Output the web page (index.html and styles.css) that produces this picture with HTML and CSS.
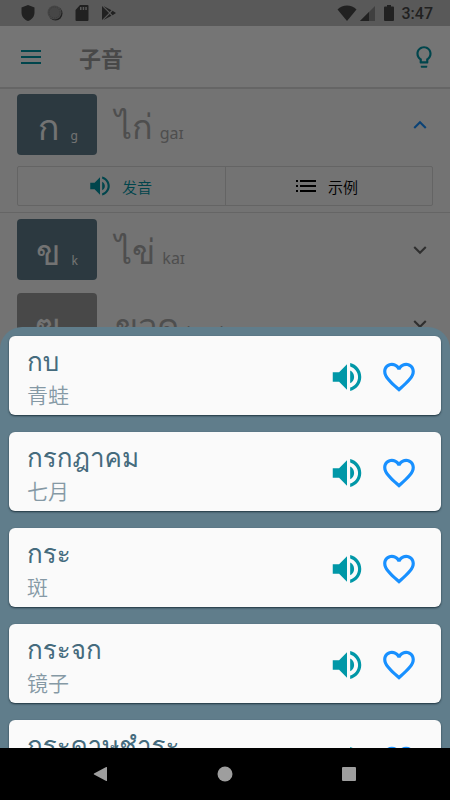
FILE: index.html
```html
<!DOCTYPE html>
<html lang="zh-CN">
<head>
<meta charset="utf-8">
<meta name="viewport" content="width=device-width, initial-scale=1">
<title>子音</title>
<link rel="stylesheet" href="styles.css">
</head>
<body>
<svg class="defs" aria-hidden="true">
  <symbol id="volume" viewBox="0 0 24 24"><path d="M3 9v6h4l5 5V4L7 9H3zm13.500 3c0-1.770-1.020-3.290-2.500-4.030v8.050c1.480-.730 2.500-2.250 2.500-4.020zM14 3.230v2.060c2.890.860 5 3.540 5 6.710s-2.110 5.850-5 6.710v2.060c4.010-.910 7-4.490 7-8.770s-2.990-7.860-7-8.770z"/></symbol>
  <symbol id="heart" viewBox="0 0 24 24"><path d="M16.500 3c-1.740 0-3.410.810-4.500 2.090C10.910 3.810 9.240 3 7.500 3 4.420 3 2 5.420 2 8.500c0 3.780 3.400 6.860 8.550 11.540L12 21.350l1.450-1.320C18.600 15.360 22 12.280 22 8.500 22 5.420 19.580 3 16.500 3zm-4.400 15.550l-.1.100-.1-.1C7.140 14.240 4 11.390 4 8.500 4 6.500 5.500 5 7.500 5c1.540 0 3.040.990 3.570 2.360h1.870C13.460 5.990 14.960 5 16.500 5c2 0 3.500 1.500 3.500 3.500 0 2.890-3.140 5.740-7.900 10.050z"/></symbol>
  <symbol id="down" viewBox="0 0 24 24"><path d="M6.500 8L12 13.400 17.500 8l1.600 1.600L12 16.700 4.900 9.600z"/></symbol>
  <symbol id="up" viewBox="0 0 24 24"><path d="M6.500 16L12 10.600l5.500 5.400 1.600-1.600L12 7.300l-7.100 7.100z"/></symbol>
</svg>
<div class="app">
  <main class="screen">
    <div class="status">
      <div class="status-left">
        <svg width="14" height="16" viewBox="0 0 14 16"><path d="M7 0l6.500 2.500v5c0 4-2.700 7.300-6.500 8.500C3.200 14.800.5 11.500.5 7.500v-5z"/></svg>
        <svg width="16" height="16" viewBox="0 0 16 16"><circle cx="8.500" cy="8.500" r="7"/><circle class="disc" cx="7.500" cy="7.500" r="7"/><circle class="disc-ring" cx="7.500" cy="7.500" r="5.500"/></svg>
        <svg width="14" height="16" viewBox="0 0 14 16"><path fill-rule="evenodd" d="M5 0h7.500Q13.500 0 13.500 1v14q0 1-1 1h-11q-1 0-1-1V5zM5 2v3h1.500V2zm2.700 0v3h1.500V2zm2.600 0v3h1.500V2z"/></svg>
        <svg width="16" height="16" viewBox="0 0 16 16"><path d="M1 1l7 7-7 7zM2.500 1l8 4.200L8.700 7zM11.600 5.800L15 8l-3.400 2.200L9.500 8zM2.500 15l8-4.200L8.700 9z"/></svg>
      </div>
      <div class="status-right">
        <svg width="20" height="16" viewBox="0 0 20 16"><path d="M10 16L.5 4.500C3 2 6.500.5 10 .5S17 2 19.500 4.500z"/></svg>
        <svg width="16" height="16" viewBox="0 0 16 16"><path class="faint" d="M16 1v15H1z"/><path d="M10 7v9H1z"/></svg>
        <svg class="battery" width="10" height="16" viewBox="0 0 10 16"><path d="M3 0h4v1.500h2q1 0 1 1V15q0 1-1 1H1q-1 0-1-1V2.500q0-1 1-1h2z"/></svg>
        <span>3:47</span>
      </div>
    </div>
    <header class="bar">
      <button class="icon-btn" aria-label="菜单"><svg width="20" height="14" viewBox="0 0 20 14"><path d="M0 0h20v2H0zM0 6h20v2H0zM0 12h20v2H0z"/></svg></button>
      <h1>子音</h1>
      <button class="icon-btn" aria-label="提示"><svg width="26" height="26" viewBox="0 0 24 24"><path d="M9 21c0 .5.400 1 1 1h4c.6 0 1-.5 1-1v-1H9v1zm3-19C8.100 2 5 5.100 5 9c0 2.400 1.200 4.500 3 5.700V17c0 .5.400 1 1 1h6c.6 0 1-.5 1-1v-2.300c1.800-1.300 3-3.400 3-5.700 0-3.900-3.100-7-7-7zm2.900 11.100l-.9.600V16h-4v-2.300l-.9-.6C7.800 12.200 7 10.600 7 9c0-2.800 2.200-5 5-5s5 2.200 5 5c0 1.600-.8 3.200-2.100 4.100z"/></svg></button>
    </header>
    <section class="entry open">
      <div class="entry-row">
        <div class="tile"><span class="letter">ก</span><span class="sound">g</span></div>
        <div class="word"><span class="thai">ไก่</span><span class="ipa">gaɪ</span></div>
        <button class="toggle active" aria-label="收起"><svg width="22" height="22"><use href="#up"/></svg></button>
      </div>
      <div class="actions">
        <button class="play"><svg width="26" height="26"><use href="#volume"/></svg>发音</button>
        <button><svg width="20" height="12" viewBox="0 0 20 12"><path d="M0 0h2v2H0zM4 0h16v2H4zM0 5h2v2H0zM4 5h16v2H4zM0 10h2v2H0zM4 10h16v2H4z"/></svg>示例</button>
      </div>
    </section>
    <section class="entry">
      <div class="entry-row">
        <div class="tile"><span class="letter">ข</span><span class="sound">k</span></div>
        <div class="word"><span class="thai">ไข่</span><span class="ipa">kaɪ</span></div>
        <button class="toggle" aria-label="展开"><svg width="22" height="22"><use href="#down"/></svg></button>
      </div>
    </section>
    <section class="entry">
      <div class="entry-row">
        <div class="tile muted"><span class="letter">ฃ</span><span class="sound">k</span></div>
        <div class="word"><span class="thai">ขวด</span><span class="ipa">kuad</span></div>
        <button class="toggle" aria-label="展开"><svg width="22" height="22"><use href="#down"/></svg></button>
      </div>
    </section>
    <div class="scrim"></div>
    <div class="sheet" role="dialog" aria-label="示例">
      <article class="card">
        <div class="text"><h2>กบ</h2><p>青蛙</p></div>
        <button class="play" aria-label="发音"><svg width="38" height="38"><use href="#volume"/></svg></button>
        <button class="like" aria-label="收藏"><svg width="38" height="38"><use href="#heart"/></svg></button>
      </article>
      <article class="card">
        <div class="text"><h2>กรกฎาคม</h2><p>七月</p></div>
        <button class="play" aria-label="发音"><svg width="38" height="38"><use href="#volume"/></svg></button>
        <button class="like" aria-label="收藏"><svg width="38" height="38"><use href="#heart"/></svg></button>
      </article>
      <article class="card">
        <div class="text"><h2>กระ</h2><p>斑</p></div>
        <button class="play" aria-label="发音"><svg width="38" height="38"><use href="#volume"/></svg></button>
        <button class="like" aria-label="收藏"><svg width="38" height="38"><use href="#heart"/></svg></button>
      </article>
      <article class="card">
        <div class="text"><h2>กระจก</h2><p>镜子</p></div>
        <button class="play" aria-label="发音"><svg width="38" height="38"><use href="#volume"/></svg></button>
        <button class="like" aria-label="收藏"><svg width="38" height="38"><use href="#heart"/></svg></button>
      </article>
      <article class="card">
        <div class="text"><h2>กระดาษชำระ</h2></div>
        <button class="play" aria-label="发音"><svg width="38" height="38"><use href="#volume"/></svg></button>
        <button class="like" aria-label="收藏"><svg width="38" height="38"><use href="#heart"/></svg></button>
      </article>
    </div>
  </main>
  <nav class="nav">
    <button aria-label="返回"><svg width="16" height="16" viewBox="0 0 16 16"><path d="M14 1.500v13q0 .8-.8.400L1 8.500q-.6-.5 0-1L13.200 1.100q.8-.4.800.4z"/></svg></button>
    <button aria-label="主页"><svg width="16" height="16" viewBox="0 0 16 16"><circle cx="8" cy="8" r="7.500"/></svg></button>
    <button aria-label="最近任务"><svg width="16" height="16" viewBox="0 0 16 16"><rect x="1" y="1" width="14" height="14" rx="1"/></svg></button>
  </nav>
</div>
</body>
</html>
```
FILE: styles.css
```css
* { box-sizing: border-box; }
body, h1, h2, p { margin: 0; font-weight: 400; }
body {
  font-family: Roboto, Loma, "Noto Sans CJK SC", sans-serif;
  background: #000;
}
button {
  display: flex;
  align-items: center;
  justify-content: center;
  padding: 0;
  border: 0;
  background: none;
  color: inherit;
  font: inherit;
}
svg { display: block; flex: none; fill: currentColor; }
.defs { position: absolute; width: 0; height: 0; }

.app { display: flex; flex-direction: column; height: 100vh; }
.screen {
  position: relative;
  flex: 1;
  min-height: 0;
  overflow: hidden;
  background: #fafafa;
}

.status {
  display: flex;
  align-items: center;
  justify-content: space-between;
  height: 26px;
  padding: 0 17px 0 21px;
  background: #c2c2c2;
  color: #484848;
}
.status-left { display: flex; gap: 12px; }
.status-right { display: flex; align-items: center; gap: 2px; font-size: 16px; font-weight: 500; }
.battery { margin: 0 6px 0 7px; }
.disc { fill: #999; }
.disc-ring { fill: none; stroke: #7c7c7c; stroke-dasharray: 1 1; }
.faint { fill: #8c8c8c; }

.bar {
  display: flex;
  align-items: center;
  height: 62px;
  padding: 0 13px 0 18px;
  background: #fefefe;
  border-bottom: 1px solid #dcdcdc;
  box-shadow: 0 1px #dcdcdc;
}
.bar h1 { flex: 1; margin-left: 35px; font-size: 22px; font-weight: 700; color: #9e9e9e; }
.icon-btn { min-width: 26px; height: 40px; color: #0097a7; }

.entry { padding: 6px 17px 7px; }
.entry.open { padding-bottom: 6px; border-bottom: 1px solid #dcdcdc; }
.entry-row { display: flex; align-items: center; }
.tile {
  display: flex;
  align-items: baseline;
  justify-content: flex-end;
  gap: 11px;
  width: 80px;
  height: 61px;
  padding: 10px 19px 0 0;
  border-radius: 4px;
  background: #607d8b;
  color: #fafafa;
}
.tile.muted { background: #9e9e9e; }
.letter, .thai { font-family: Loma, sans-serif; font-size: 36px; line-height: 48px; }
.sound { font-family: "Noto Sans", sans-serif; font-size: 12px; }
.word { display: flex; flex: 1; align-items: baseline; gap: 7px; margin-left: 18px; padding-top: 4px; color: #aaa; }
.thai { font-size: 34px; }
.ipa { font-family: "Noto Sans", sans-serif; font-size: 16px; }
.toggle { width: 26px; height: 40px; color: #666; }
.toggle.active { color: #1890ff; }

.actions {
  display: grid;
  grid-template-columns: 1fr 1fr;
  margin-top: 11px;
  border: 1px solid #d9d9d9;
  border-radius: 2px;
}
.actions button { gap: 12px; height: 38px; padding-right: 4px; font-family: "Noto Sans CJK SC", sans-serif; font-size: 15px; font-weight: 350; color: #000; }
.actions button + button { border-left: 1px solid #d9d9d9; }
.actions .play { gap: 9px; }
.actions .play, .play { color: #0097a7; }

.scrim { position: absolute; inset: 0; background: rgba(0, 0, 0, .54); }
.sheet {
  position: absolute;
  inset: 327px 0 0;
  display: flex;
  flex-direction: column;
  gap: 17px;
  padding: 9px 9px 0;
  overflow: hidden;
  border-radius: 22px 22px 0 0;
  background: #607d8b;
}
.card {
  display: flex;
  flex: none;
  align-items: flex-start;
  gap: 14px;
  height: 79px;
  padding: 8px 23px 0 18px;
  border-radius: 6px;
  background: #fafafa;
  box-shadow: 0 1px 2px rgba(0, 20, 30, .7);
}
.card button { height: 66px; }
.text { flex: 1; }
.card h2 { font-family: Loma, sans-serif; font-size: 26px; line-height: 36px; color: #456b7d; }
.card p { font-family: "Noto Sans CJK SC", sans-serif; font-size: 21px; line-height: 28px; font-weight: 350; color: #8599a5; }
.card .like { color: #1890ff; }

.nav {
  display: flex;
  align-items: center;
  justify-content: center;
  gap: 84px;
  height: 52px;
  background: #000;
  color: #9e9e9e;
}
.nav button { width: 40px; height: 40px; }
```
